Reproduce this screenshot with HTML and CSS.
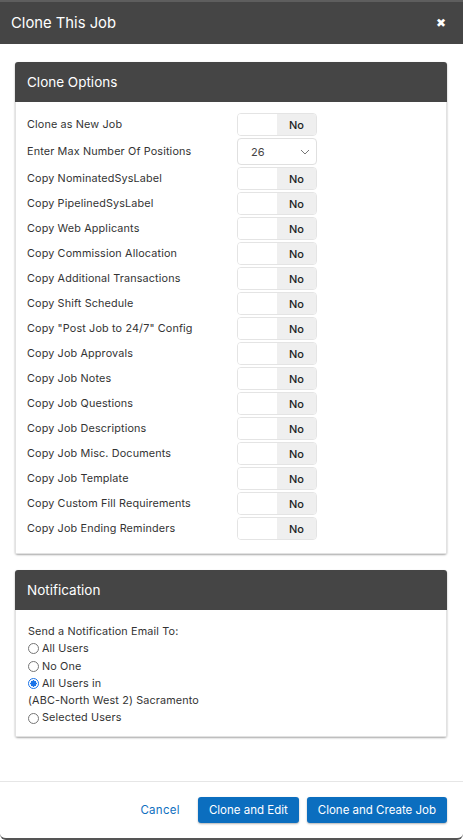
FILE: index.html
```html
<!DOCTYPE html>
<html>
<head>
<meta charset="utf-8">
<link rel="stylesheet" href="styles.css">
</head>
<body>
<div class="modal">
  <div class="modal-header">
    <span class="modal-title">Clone This Job</span>
    <span class="close">&#x2716;</span>
  </div>
  <div class="modal-body">
    <div class="card">
      <div class="card-header">Clone Options</div>
      <div class="card-body options">
        <div class="row"><span class="label">Clone as New Job</span><span class="toggle"><span class="t-off"></span><span class="t-no">No</span></span></div>
        <div class="row row-select"><span class="label">Enter Max Number Of Positions</span><span class="select"><span>26</span><svg width="10" height="6" viewBox="0 0 10 6"><path d="M1 1 L5 5 L9 1" fill="none" stroke="#777" stroke-width="1"/></svg></span></div>
        <div class="row"><span class="label">Copy NominatedSysLabel</span><span class="toggle"><span class="t-off"></span><span class="t-no">No</span></span></div>
        <div class="row"><span class="label">Copy PipelinedSysLabel</span><span class="toggle"><span class="t-off"></span><span class="t-no">No</span></span></div>
        <div class="row"><span class="label">Copy Web Applicants</span><span class="toggle"><span class="t-off"></span><span class="t-no">No</span></span></div>
        <div class="row"><span class="label">Copy Commission Allocation</span><span class="toggle"><span class="t-off"></span><span class="t-no">No</span></span></div>
        <div class="row"><span class="label">Copy Additional Transactions</span><span class="toggle"><span class="t-off"></span><span class="t-no">No</span></span></div>
        <div class="row"><span class="label">Copy Shift Schedule</span><span class="toggle"><span class="t-off"></span><span class="t-no">No</span></span></div>
        <div class="row"><span class="label">Copy "Post Job to 24/7" Config</span><span class="toggle"><span class="t-off"></span><span class="t-no">No</span></span></div>
        <div class="row"><span class="label">Copy Job Approvals</span><span class="toggle"><span class="t-off"></span><span class="t-no">No</span></span></div>
        <div class="row"><span class="label">Copy Job Notes</span><span class="toggle"><span class="t-off"></span><span class="t-no">No</span></span></div>
        <div class="row"><span class="label">Copy Job Questions</span><span class="toggle"><span class="t-off"></span><span class="t-no">No</span></span></div>
        <div class="row"><span class="label">Copy Job Descriptions</span><span class="toggle"><span class="t-off"></span><span class="t-no">No</span></span></div>
        <div class="row"><span class="label">Copy Job Misc. Documents</span><span class="toggle"><span class="t-off"></span><span class="t-no">No</span></span></div>
        <div class="row"><span class="label">Copy Job Template</span><span class="toggle"><span class="t-off"></span><span class="t-no">No</span></span></div>
        <div class="row"><span class="label">Copy Custom Fill Requirements</span><span class="toggle"><span class="t-off"></span><span class="t-no">No</span></span></div>
        <div class="row"><span class="label">Copy Job Ending Reminders</span><span class="toggle"><span class="t-off"></span><span class="t-no">No</span></span></div>
      </div>
    </div>
    <div class="card">
      <div class="card-header">Notification</div>
      <div class="card-body notif">
        <div class="line">Send a Notification Email To:</div>
        <div class="line radio-line"><span class="radio"></span>All Users</div>
        <div class="line radio-line"><span class="radio"></span>No One</div>
        <div class="line radio-line"><span class="radio checked"></span>All Users in</div>
        <div class="line">(ABC-North West 2) Sacramento</div>
        <div class="line radio-line"><span class="radio"></span>Selected Users</div>
      </div>
    </div>
  </div>
  <div class="modal-footer">
    <span class="cancel">Cancel</span>
    <span class="btn">Clone and Edit</span>
    <span class="btn">Clone and Create Job</span>
  </div>
</div>
</body>
</html>
```
FILE: styles.css
```css
html, body {
  margin: 0;
  padding: 0;
  background: #fff;
}
body {
  font-family: "Inter", "Open Sans", sans-serif;
  color: #333;
  width: 463px;
  height: 840px;
  overflow: hidden;
}
.modal {
  height: 840px;
  border-bottom: 2px solid #555;
  border-radius: 0 0 6px 6px;
  display: flex;
  flex-direction: column;
  box-sizing: border-box;
}
.modal-header {
  height: 44px;
  box-sizing: border-box;
  background: #454545;
  border-top: 2px solid #5e5e5e;
  display: flex;
  align-items: center;
  justify-content: space-between;
  padding: 0 17px 0 11px;
}
.modal-title {
  color: #fff;
  font-size: 14.8px;
  font-weight: 400;
}
.close {
  color: #fff;
  font-size: 12px;
  font-family: "DejaVu Sans", sans-serif;
}
.modal-body {
  padding: 18px 16px 0 15px;
  flex: 1;
}
.card {
  border-radius: 3px;
  box-shadow: 0 1px 2px rgba(0,0,0,0.35);
  margin-bottom: 16px;
  background: #fff;
}
.card-header {
  height: 40px;
  background: #454545;
  color: #fff;
  font-size: 13.5px;
  font-weight: 400;
  display: flex;
  align-items: center;
  padding-left: 12px;
  border-radius: 3px 3px 0 0;
}
.card-body {
  border: 1px solid #e2e2e2;
  border-top: none;
}
.options {
  padding: 11px 12px 13px 11px;
  display: flex;
  flex-direction: column;
  gap: 2px;
}
.row {
  display: flex;
  align-items: center;
  height: 23px;
}
.row-select {
  height: 27px;
}
.label {
  width: 210px;
  font-size: 10.8px;
  color: #333;
  letter-spacing: 0.15px;
}
.toggle {
  width: 80px;
  height: 23px;
  box-sizing: border-box;
  border: 1px solid #e4e4e4;
  border-radius: 4px;
  display: flex;
  overflow: hidden;
}
.t-off {
  flex: 1;
  background: #fff;
}
.t-no {
  flex: 1;
  background: #efefef;
  display: flex;
  align-items: center;
  justify-content: center;
  font-size: 11px;
  font-weight: 500;
  color: #222;
}
.select {
  width: 80px;
  height: 27px;
  box-sizing: border-box;
  border: 1px solid #e0e0e0;
  border-radius: 4px;
  display: flex;
  align-items: center;
  justify-content: space-between;
  padding: 0 6px 0 13px;
  font-size: 11px;
  color: #444;
}
.notif {
  padding: 13px 12px 9px 12px;
}
.line {
  font-size: 10.8px;
  color: #333;
  line-height: 17.3px;
  display: flex;
  align-items: center;
  letter-spacing: 0.15px;
}
.radio {
  width: 11px;
  height: 11px;
  box-sizing: border-box;
  border: 1px solid #767676;
  border-radius: 50%;
  margin-right: 3px;
  background: #fff;
}
.radio.checked {
  border: 1.5px solid #1a73e8;
  background: radial-gradient(circle, #1a73e8 0 3px, #fff 3.2px);
}
.modal-footer {
  height: 57px;
  border-top: 1px solid #e6e6e6;
  display: flex;
  align-items: flex-start;
  justify-content: flex-end;
  padding: 15px 16px 0 0;
  box-sizing: border-box;
  gap: 8px;
}
.cancel {
  color: #1070c0;
  font-size: 11.5px;
  font-weight: 400;
  height: 26px;
  display: flex;
  align-items: center;
  margin-right: 10px;
  letter-spacing: 0.3px;
}
.btn {
  background: #0b6ebf;
  color: #fff;
  font-size: 11.5px;
  font-weight: 400;
  height: 26px;
  padding: 0 11px;
  border-radius: 3px;
  display: flex;
  align-items: center;
  box-shadow: 0 1px 2px rgba(0,0,0,0.3);
}
```
